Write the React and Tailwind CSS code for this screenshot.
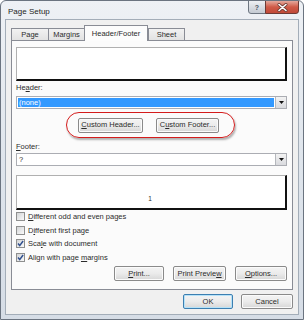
import React from "react";

function U({ children }) {
  return <span className="underline underline-offset-[1px] decoration-[0.5px]">{children}</span>;
}

function Btn({ children, w, def }) {
  return (
    <div
      className={`${w} h-[15px] flex items-center justify-center rounded-[2px] border ${
        def ? "border-[#3c7fb1] shadow-[inset_0_0_0_1px_#b6e2f8]" : "border-[#8a8a8a] shadow-[inset_0_0_0_1px_#fbfbfb]"
      } bg-gradient-to-b from-[#f4f4f4] via-[#ebebeb] to-[#d7d7d7] text-[7.5px] leading-none text-[#2b2b2b]`}
    >
      {children}
    </div>
  );
}

function Check({ checked, children }) {
  return (
    <div className="h-[13.5px] flex items-center gap-[3px]">
      <div className="w-[9px] h-[9px] border border-[#8e8f8f] bg-gradient-to-br from-[#d2d4d6] to-[#fafafa] flex items-center justify-center">
        {checked && (
          <svg width="7" height="7" viewBox="0 0 7 7">
            <path d="M1 3.6 L2.7 5.6 L6.1 1" stroke="#31508f" strokeWidth="1.5" fill="none" />
          </svg>
        )}
      </div>
      <span className="text-[7.5px] leading-none text-[#2b2b2b]">{children}</span>
    </div>
  );
}

function Arrow() {
  return (
    <div className="w-[11px] h-full border-l border-[#b5b8bd] bg-gradient-to-b from-[#f3f3f3] to-[#d9dade] flex items-center justify-center">
      <svg width="5" height="3" viewBox="0 0 5 3">
        <path d="M0 0 L5 0 L2.5 3 Z" fill="#111" />
      </svg>
    </div>
  );
}

function Tab({ children, w, sel }) {
  if (sel) {
    return (
      <div
        className={`${w} h-[16px] -mb-px relative z-10 border border-b-0 border-[#898c95] bg-[#fcfcfc] flex items-center justify-center text-[7.5px] leading-none text-[#2b2b2b]`}
      >
        {children}
      </div>
    );
  }
  return (
    <div
      className={`${w} h-[12px] -mr-px border border-b-0 border-[#898c95] bg-gradient-to-b from-[#f2f2f2] to-[#e2e2e2] flex items-center justify-center text-[7.5px] leading-none text-[#2b2b2b]`}
    >
      {children}
    </div>
  );
}

export default function App() {
  return (
    <div className="w-[304px] h-[320px] flex flex-col rounded-t-[6px] border border-[#6b7480] bg-gradient-to-b from-[#eef1f5] via-[#dfe5ec] to-[#d6dde6] font-['Liberation_Sans',Arial,sans-serif] overflow-hidden">
      {/* Title bar */}
      <div className="h-[18px] flex items-start justify-between pr-[4px]">
        <div className="pl-[7px] pt-[7px] text-[8px] leading-none text-[#1e1e1e]">Page Setup</div>
        <div className="flex -mt-px">
          <div className="w-[18px] h-[14px] rounded-bl-[3px] border border-[#6d7681] bg-gradient-to-b from-[#eef0f3] to-[#c4cad2] flex items-center justify-center text-[7px] leading-none text-[#4a5563] font-bold">
            ?
          </div>
          <div className="w-[34px] h-[14px] -ml-px rounded-br-[3px] border border-[#6d3b35] bg-gradient-to-b from-[#e3a89d] via-[#cf5a47] to-[#c14a38] flex items-center justify-center">
            <svg width="11" height="9" viewBox="0 0 11 9">
              <path d="M2 1.5 L9 7.5 M9 1.5 L2 7.5" stroke="#6a3a33" strokeWidth="3" strokeLinecap="round" />
              <path d="M2 1.5 L9 7.5 M9 1.5 L2 7.5" stroke="#ffffff" strokeWidth="1.6" strokeLinecap="round" />
            </svg>
          </div>
        </div>
      </div>

      {/* Client area */}
      <div className="flex-1 mx-[4px] mb-[4px] border border-[#a3adb8] bg-[#f0f0f0] flex flex-col">
        {/* Tabs */}
        <div className="mt-[5px] mx-[5px] flex items-end h-[15px]">
          <Tab w="w-[38px]">Page</Tab>
          <Tab w="w-[37px]">Margins</Tab>
          <Tab w="w-[64px]" sel>
            Header/Footer
          </Tab>
          <Tab w="w-[37px]">Sheet</Tab>
        </div>

        {/* Panel */}
        <div className="mx-[5px] h-[250px] border border-[#898c95] bg-[#fbfbfb] pt-[6px] pl-[4px] pr-[5px] flex flex-col">
          {/* header preview */}
          <div className="h-[34px] border-l border-t border-l-[#b0b0b0] border-t-[#b0b0b0] border-r-2 border-b-2 border-r-[#111] border-b-[#111] bg-white" />

          <div className="pt-[2px] pb-[3px] text-[7.5px] leading-[10px] text-[#2b2b2b]">
            He<U>a</U>der:
          </div>
          <div className="h-[13px] border border-[#abadb3] bg-white flex">
            <div className="flex-1 m-[1px] bg-[#3399ff] flex items-center pl-[1px] text-[7.5px] leading-none text-white">
              (none)
            </div>
            <Arrow />
          </div>

          <div className="mt-[3px] h-[26px] flex">
            <div className="ml-[50px] w-[169px] h-[26px] rounded-full border-[1.5px] border-[#d41c1c] shadow-[1px_2px_2px_rgba(0,0,0,0.3)] flex items-center pl-[11px] gap-[13px]">
              <Btn w="w-[65px]">
                <U>C</U>ustom Header...
              </Btn>
              <Btn w="w-[63px]">
                C<U>u</U>stom Footer...
              </Btn>
            </div>
          </div>

          <div className="pt-[4px] pb-[1px] text-[7.5px] leading-[10px] text-[#2b2b2b]">
            <U>F</U>ooter:
          </div>
          <div className="h-[13px] border border-[#abadb3] bg-white flex">
            <div className="flex-1 flex items-center pl-[2px] text-[7.5px] leading-none text-[#2b2b2b]">?</div>
            <Arrow />
          </div>

          {/* footer preview */}
          <div className="mt-[9px] h-[35px] border-l border-t border-l-[#b0b0b0] border-t-[#b0b0b0] border-r-2 border-b-2 border-r-[#111] border-b-[#111] bg-white flex items-end justify-center pb-[6px] pr-[2px]">
            <span className="text-[6.5px] leading-none text-[#2b2b2b]">1</span>
          </div>

          <Check>
            <U>D</U>ifferent odd and even pages
          </Check>
          <Check>
            D<U>i</U>fferent first page
          </Check>
          <Check checked>
            Sca<U>l</U>e with document
          </Check>
          <Check checked>
            Align with page <U>m</U>argins
          </Check>

          <div className="mt-[2px] flex justify-end gap-[9px]">
            <Btn w="w-[50px]">
              <U>P</U>rint...
            </Btn>
            <Btn w="w-[53px]">
              Print Previe<U>w</U>
            </Btn>
            <Btn w="w-[52px]">
              <U>O</U>ptions...
            </Btn>
          </div>
        </div>

        <div className="mt-[4px] mx-[5px] flex justify-end gap-[8px]">
          <Btn w="w-[50px]" def>
            OK
          </Btn>
          <Btn w="w-[52px]">Cancel</Btn>
        </div>
      </div>
    </div>
  );
}
